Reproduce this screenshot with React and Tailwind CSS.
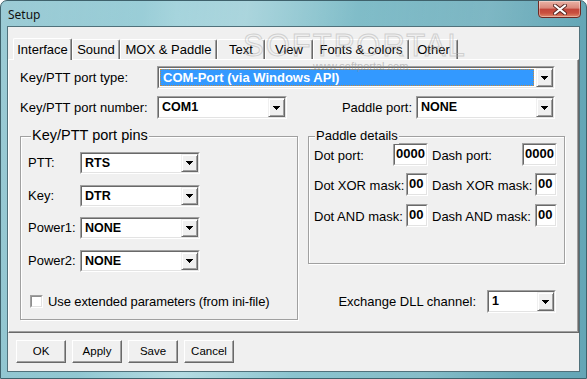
import React from "react";

function DropBtn() {
  return (
    <div className="w-[17px] h-full shrink-0 flex items-center justify-center bg-[#f0f0f0] border border-t-[#f0f0f0] border-l-[#f0f0f0] border-r-[#696969] border-b-[#696969] shadow-[inset_1px_1px_0_#ffffff,inset_-1px_-1px_0_#a0a0a0]">
      <svg width="7" height="4" viewBox="0 0 7 4" shapeRendering="crispEdges">
        <rect x="0" y="0" width="7" height="1" fill="#000" />
        <rect x="1" y="1" width="5" height="1" fill="#000" />
        <rect x="2" y="2" width="3" height="1" fill="#000" />
        <rect x="3" y="3" width="1" height="1" fill="#000" />
      </svg>
    </div>
  );
}

function Combo({ value, w, h, selected }) {
  return (
    <div className={`${w} ${h} flex shrink-0 border border-t-[#a0a0a0] border-l-[#a0a0a0] border-r-white border-b-white`}>
      <div className="flex flex-1 min-w-0 bg-white border border-t-[#696969] border-l-[#696969] border-r-[#e3e3e3] border-b-[#e3e3e3]">
        {selected ? (
          <div className="flex-1 m-[1px] mr-[2px] flex items-center pl-[3px] bg-[#3399ff] text-white font-bold text-[13px] outline outline-1 outline-dotted outline-[#c98a3a] -outline-offset-1">
            {value}
          </div>
        ) : (
          <div className="flex-1 flex items-center pl-[3px] font-bold text-[12.5px] text-black">{value}</div>
        )}
        <DropBtn />
      </div>
    </div>
  );
}

function Edit({ value, w }) {
  return (
    <div className={`${w} h-[23px] shrink-0 border border-t-[#a0a0a0] border-l-[#a0a0a0] border-r-white border-b-white`}>
      <div className="h-full flex items-center pb-[2px] pl-[1px] bg-white border border-t-[#696969] border-l-[#696969] border-r-[#e3e3e3] border-b-[#e3e3e3] font-bold text-[13px] leading-[16px]">
        {value}
      </div>
    </div>
  );
}

function Button({ children }) {
  return (
    <div className="w-[50px] h-[23px] flex items-center justify-center bg-[#f0f0f0] border border-t-white border-l-white border-r-[#696969] border-b-[#696969] shadow-[inset_-1px_-1px_0_#a0a0a0] text-[11.5px] text-black">
      {children}
    </div>
  );
}

const tabs = [
  { label: "Sound", w: "w-[48px]" },
  { label: "MOX & Paddle", w: "w-[97px]" },
  { label: "Text", w: "w-[48px]" },
  { label: "View", w: "w-[48px]" },
  { label: "Fonts & colors", w: "w-[96px]" },
  { label: "Other", w: "w-[49px]" },
];

export default function App() {
  return (
    <div className="relative w-[587px] h-[379px] overflow-hidden flex flex-col rounded-t-[7px] border border-[#3f626c] px-[6px] pb-[6px] bg-[linear-gradient(100deg,rgba(255,255,255,0.18)_0%,rgba(255,255,255,0)_22%,rgba(255,255,255,0.22)_38%,rgba(255,255,255,0)_55%,rgba(255,255,255,0.12)_75%,rgba(255,255,255,0)_90%),linear-gradient(90deg,#86c0cc_0%,#9fd1da_30%,#86c1cc_55%,#6eafbd_80%,#64a6b6_100%)] font-['Liberation_Sans',Arial,sans-serif] text-black">
      {/* title bar */}
      <div className="h-[25px] flex items-start justify-between shrink-0">
        <span className="mt-[6px] ml-[1px] text-[12px] leading-[15px] font-['Noto_Sans',sans-serif] text-[#111]">Setup</span>
        <div className="mt-[-1px] mr-[-1px] w-[43px] h-[18px] flex items-center justify-center rounded-b-[4px] border border-[#6e2a24] bg-[linear-gradient(180deg,#eab3a6_0%,#d9877a_45%,#c2453a_50%,#c9503f_75%,#df8a6c_100%)] shadow-[inset_0_0_0_1px_rgba(255,255,255,0.35)]">
          <svg width="14" height="11" viewBox="0 0 14 11">
            <path d="M2 1.5 L12 9.5 M12 1.5 L2 9.5" stroke="#5a2a24" strokeWidth="4" strokeLinecap="round" />
            <path d="M2 1.5 L12 9.5 M12 1.5 L2 9.5" stroke="#ffffff" strokeWidth="2.2" strokeLinecap="round" />
          </svg>
        </div>
      </div>

      {/* client */}
      <div className="flex-1 flex flex-col border border-[#50717b] bg-[#f0f0f0]">
        {/* tab strip */}
        <div className="h-[32px] shrink-0 flex items-end pl-[5px]">
          <div className="relative z-10 mb-[-1px] w-[59px] h-[22px] flex items-center justify-center bg-[#f0f0f0] border-t border-l border-r border-t-white border-l-white border-r-[#696969] rounded-t-[2px] shadow-[inset_-1px_0_0_#a0a0a0] text-[13px]">
            Interface
          </div>
          {tabs.map((t) => (
            <div
              key={t.label}
              className={`${t.w} h-[20px] flex items-center justify-center pt-[1px] border-t border-l border-r border-t-white border-l-white border-r-[#696969] rounded-t-[2px] shadow-[inset_-1px_0_0_#a0a0a0] text-[13px]`}
            >
              {t.label}
            </div>
          ))}
        </div>

        {/* page body */}
        <div className="h-[274px] shrink-0 border border-t-white border-l-white border-r-[#696969] border-b-[#696969] shadow-[inset_-1px_-1px_0_#a0a0a0] pl-[11px] pt-[6px] text-[13px]">
          <div className="flex items-center h-[23px]">
            <span className="w-[137px]">Key/PTT port type:</span>
            <Combo value="COM-Port (via Windows API)" w="w-[398px]" h="h-[23px]" selected />
          </div>
          <div className="flex items-center h-[23px] mt-[7px]">
            <span className="w-[137px]">Key/PTT port number:</span>
            <Combo value="COM1" w="w-[130px]" h="h-[23px]" />
            <span className="ml-auto mr-[4px]">Paddle port:</span>
            <Combo value="NONE" w="w-[139px]" h="h-[23px]" />
            <span className="w-[23px]" />
          </div>

          <div className="flex items-start mt-[17px]">
            {/* Key/PTT port pins */}
            <div className="relative w-[278px] h-[184px] border border-[#a0a0a0] shadow-[inset_1px_1px_0_#ffffff,1px_1px_0_#ffffff] pl-[7px] pt-[15px]">
              <span className="absolute left-[10px] top-[-10px] px-[1px] bg-[#f0f0f0] text-[14.5px] leading-[17px]">Key/PTT port pins</span>
              <div className="flex items-center h-[22px]">
                <span className="w-[52px]">PTT:</span>
                <Combo value="RTS" w="w-[120px]" h="h-[22px]" />
              </div>
              <div className="flex items-center h-[22px] mt-[11px]">
                <span className="w-[52px]">Key:</span>
                <Combo value="DTR" w="w-[120px]" h="h-[22px]" />
              </div>
              <div className="flex items-center h-[22px] mt-[10px]">
                <span className="w-[52px]">Power1:</span>
                <Combo value="NONE" w="w-[120px]" h="h-[22px]" />
              </div>
              <div className="flex items-center h-[22px] mt-[11px]">
                <span className="w-[52px]">Power2:</span>
                <Combo value="NONE" w="w-[120px]" h="h-[22px]" />
              </div>
              <div className="flex items-center mt-[22px] ml-[2px] h-[15px]">
                <div className="w-[13px] h-[13px] border border-t-[#a0a0a0] border-l-[#a0a0a0] border-r-white border-b-white">
                  <div className="w-full h-full bg-white border border-t-[#8d8d8d] border-l-[#8d8d8d] border-r-[#e3e3e3] border-b-[#e3e3e3]" />
                </div>
                <span className="ml-[5px] tracking-[-0.1px]">Use extended parameters (from ini-file)</span>
              </div>
            </div>

            {/* right column */}
            <div className="ml-[10px] w-[257px] flex flex-col">
              <div className="relative h-[128px] border border-[#a0a0a0] shadow-[inset_1px_1px_0_#ffffff,1px_1px_0_#ffffff] pl-[5px] pt-[6px]">
                <span className="absolute left-[6px] top-[-10px] px-[1px] bg-[#f0f0f0] leading-[17px]">Paddle details</span>
                <div className="grid grid-cols-[114px_125px] gap-x-[4px]">
                  <div className="flex items-center justify-between h-[23px]">
                    <span className="pt-[2px]">Dot port:</span>
                    <Edit value="0000" w="w-[35px]" />
                  </div>
                  <div className="flex items-center justify-between h-[23px]">
                    <span className="pt-[2px]">Dash port:</span>
                    <Edit value="0000" w="w-[35px]" />
                  </div>
                  <div className="flex items-center justify-between h-[23px] mt-[7px]">
                    <span className="pt-[2px]">Dot XOR mask:</span>
                    <Edit value="00" w="w-[22px]" />
                  </div>
                  <div className="flex items-center justify-between h-[23px] mt-[7px]">
                    <span className="pt-[2px]">Dash XOR mask:</span>
                    <Edit value="00" w="w-[22px]" />
                  </div>
                  <div className="flex items-center justify-between h-[23px] mt-[8px]">
                    <span className="pt-[2px]">Dot AND mask:</span>
                    <Edit value="00" w="w-[22px]" />
                  </div>
                  <div className="flex items-center justify-between h-[23px] mt-[8px]">
                    <span className="pt-[2px]">Dash AND mask:</span>
                    <Edit value="00" w="w-[22px]" />
                  </div>
                </div>
              </div>
              <div className="flex items-center justify-end mt-[26px] pr-[9px]">
                <span className="mr-[11px]">Exchange DLL channel:</span>
                <Combo value="1" w="w-[69px]" h="h-[23px]" />
              </div>
            </div>
          </div>
        </div>

        {/* bottom buttons */}
        <div className="flex-1 flex items-start gap-[6px] pl-[8px] pt-[7px]">
          <Button>OK</Button>
          <Button>Apply</Button>
          <Button>Save</Button>
          <Button>Cancel</Button>
        </div>
      </div>

      {/* watermark overlay */}
      <div className="pointer-events-none absolute left-[242px] top-[30px] flex flex-col items-start">
        <span className="text-[31px] leading-[30px] tracking-[2px] text-transparent [-webkit-text-stroke:1px_rgba(175,175,175,0.5)]">SOFTPORTAL</span>
        <span className="ml-[70px] text-[11px] leading-[11px] text-[rgba(140,140,140,0.5)]">www.softportal.com</span>
      </div>
    </div>
  );
}
